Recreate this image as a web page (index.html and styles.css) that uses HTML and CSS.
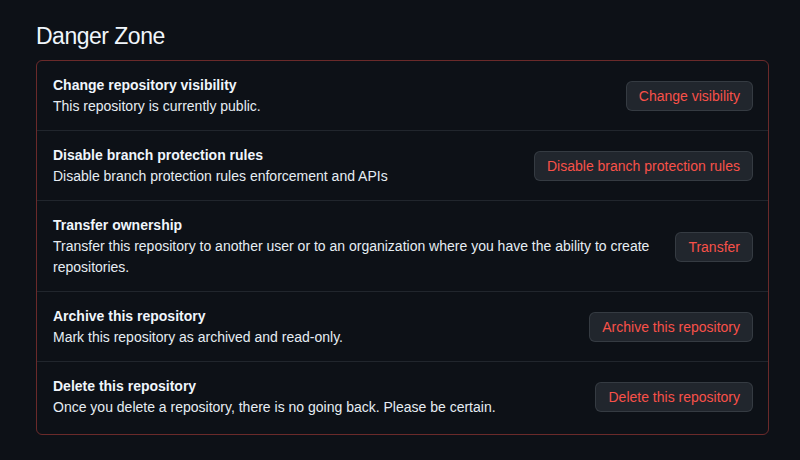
FILE: index.html
```html
<!DOCTYPE html>
<html lang="en">
<head>
  <meta charset="UTF-8">
  <meta name="viewport" content="width=device-width, initial-scale=1.0">
  <title>Danger Zone</title>
  <link rel="stylesheet" href="styles.css">
</head>
<body>
  <div class="settings">
    <h2 class="subhead">Danger Zone</h2>

    <div class="danger-box">
      <div class="danger-row">
        <div class="details">
          <strong class="row-title">Change repository visibility</strong>
          <p class="row-desc">This repository is currently public.</p>
        </div>
        <button class="btn-danger">Change visibility</button>
      </div>

      <div class="danger-row">
        <div class="details">
          <strong class="row-title">Disable branch protection rules</strong>
          <p class="row-desc">Disable branch protection rules enforcement and APIs</p>
        </div>
        <button class="btn-danger">Disable branch protection rules</button>
      </div>

      <div class="danger-row">
        <div class="details">
          <strong class="row-title">Transfer ownership</strong>
          <p class="row-desc">Transfer this repository to another user or to an organization where you have the ability to create repositories.</p>
        </div>
        <button class="btn-danger">Transfer</button>
      </div>

      <div class="danger-row">
        <div class="details">
          <strong class="row-title">Archive this repository</strong>
          <p class="row-desc">Mark this repository as archived and read-only.</p>
        </div>
        <button class="btn-danger">Archive this repository</button>
      </div>

      <div class="danger-row">
        <div class="details">
          <strong class="row-title">Delete this repository</strong>
          <p class="row-desc">Once you delete a repository, there is no going back. Please be certain.</p>
        </div>
        <button class="btn-danger">Delete this repository</button>
      </div>
    </div>
  </div>
</body>
</html>
```

FILE: styles.css
```css
body {
  margin: 0;
  background-color: #0d1117;
  color: #e6edf3;
  font-family: "Liberation Sans", Arial, sans-serif;
  font-size: 14px;
  line-height: 21px;
}

.settings {
  padding: 21px 31px 0 36px;
}

.subhead {
  margin: 0 0 9px;
  font-size: 23px;
  font-weight: 400;
  line-height: 30px;
  letter-spacing: -0.5px;
  color: #f0f6fc;
}

.danger-box {
  border: 1px solid rgba(248, 81, 73, 0.4);
  border-radius: 6px;
}

.danger-row {
  display: flex;
  align-items: center;
  justify-content: space-between;
  gap: 16px;
  padding: 14px 15px 13px 16px;
  border-top: 1px solid #21262d;
}

.danger-row:first-child {
  border-top: none;
}

.danger-row:last-child {
  padding-bottom: 16px;
}

.details {
  flex: 1;
}

.row-title {
  display: block;
  font-weight: 700;
  color: #f0f6fc;
}

.row-desc {
  margin: 0;
  color: #e6edf3;
}

.btn-danger {
  flex-shrink: 0;
  height: 30px;
  padding: 0 12px;
  border: 1px solid rgba(240, 246, 252, 0.1);
  border-radius: 6px;
  background-color: #21262d;
  color: #f85149;
  font-family: inherit;
  font-size: 14px;
  font-weight: 400;
  cursor: pointer;
}
```
